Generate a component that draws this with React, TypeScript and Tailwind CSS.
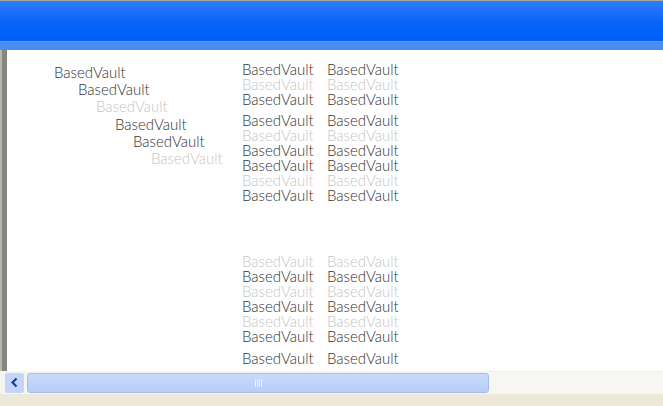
import React from "react";

const stair = [
  { ml: "ml-[47px]", light: false },
  { ml: "ml-[71px]", light: false },
  { ml: "ml-[89px]", light: true },
  { ml: "ml-[108px]", light: false },
  { ml: "ml-[126px]", light: false },
  { ml: "ml-[144px]", light: true },
];

// d = dark, l = light; each group is separated by a small gap
const groups: { mt: string; rows: string[] }[] = [
  { mt: "mt-0", rows: ["d", "l", "d"] },
  { mt: "mt-[6px]", rows: ["d", "l", "d", "d", "l", "d"] },
  { mt: "mt-[51px]", rows: ["l", "d", "l", "d", "l", "d"] },
  { mt: "mt-[7px]", rows: ["d"] },
];

function Word({ light, className = "" }: { light: boolean; className?: string }) {
  return (
    <span
      className={`block whitespace-nowrap text-[15px] font-light tracking-[0px] ${
        light ? "text-[#c6c6c6]" : "text-[#333333]"
      } ${className}`}
    >
      BasedVault
    </span>
  );
}

export default function App() {
  return (
    <div
      className="flex h-[406px] w-[663px] flex-col overflow-hidden bg-white"
      style={{ fontFamily: "Lato, Inter, 'Liberation Sans', sans-serif" }}
    >
      {/* Title bar */}
      <div className="h-[1px] shrink-0 bg-[#a7a7a7]" />
      <div className="h-[40px] shrink-0 bg-gradient-to-b from-[#2e7ef6] via-[#0865fa] to-[#005ff9]" />
      <div className="h-[9px] shrink-0 border-t border-[#5c97ee] bg-[#4a8cf2]" />

      {/* Body */}
      <div className="flex min-h-0 flex-1">
        <div className="w-[2px] shrink-0 bg-[#b9b7af]" />
        <div className="w-[5px] shrink-0 bg-[#87867e]" />
        <div className="flex flex-1 items-start">
          <div className="flex w-[235px] shrink-0 flex-col pt-[14px] leading-[17.2px]">
            {stair.map((s, i) => (
              <Word key={i} light={s.light} className={s.ml} />
            ))}
          </div>
          <div className="flex flex-col pt-[12px] leading-[15px]">
            {groups.map((g, gi) => (
              <div key={gi} className={`flex flex-col ${g.mt}`}>
                {g.rows.map((r, ri) => (
                  <div key={ri} className="flex">
                    <Word light={r === "l"} className="w-[85px]" />
                    <Word light={r === "l"} className="w-[85px]" />
                  </div>
                ))}
              </div>
            ))}
          </div>
        </div>
      </div>

      {/* Horizontal scrollbar */}
      <div className="flex h-[23px] shrink-0 items-center bg-[#f6f5f0] pl-[5px] pr-0">
        <div className="flex h-[20px] w-[19px] items-center justify-center rounded-[2px] border border-[#c9d6f0] bg-[#c3d5fa]">
          <svg width="9" height="11" viewBox="0 0 9 11">
            <path d="M6.5 1.5 L2.5 5.5 L6.5 9.5" fill="none" stroke="#1f3d8f" strokeWidth="2.2" />
          </svg>
        </div>
        <div className="ml-[3px] flex h-[20px] w-[462px] items-center justify-center rounded-[3px] border border-[#a8bde6] bg-gradient-to-b from-[#c9dafb] to-[#b7cdf8]">
          <div className="flex gap-[1px]">
            {[0, 1, 2, 3].map((i) => (
              <div key={i} className="h-[8px] w-[1px] bg-[#e9f0fd]" />
            ))}
          </div>
        </div>
        <div className="h-full flex-1 border-t border-[#ecebe5] bg-[#f7f6f2]" />
      </div>

      {/* Status bar */}
      <div className="h-[12px] shrink-0 bg-[#ece9d8]" />
    </div>
  );
}
